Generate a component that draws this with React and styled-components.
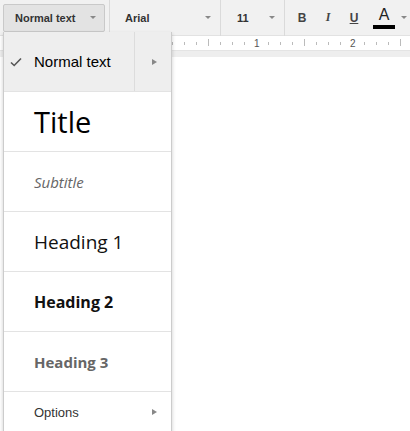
import React from "react"
import styled, { createGlobalStyle } from "styled-components"

const GlobalStyle = createGlobalStyle`
  html, body {
    margin: 0;
    padding: 0;
    background: #ffffff;
    font-family: "Liberation Sans", Arial, sans-serif;
  }
`

const Page = styled.div`
  position: relative;
  width: 410px;
  height: 431px;
  overflow: hidden;
  background: #ffffff;
`

const Toolbar = styled.div`
  display: flex;
  align-items: center;
  height: 36px;
  box-sizing: border-box;
  padding: 0 0 0 3px;
  background: #f1f1f1;
  border-bottom: 1px solid #e2e2e2;
`

const Select = styled.div`
  display: flex;
  align-items: center;
  justify-content: space-between;
  box-sizing: border-box;
  width: ${p => p.w}px;
  height: 28px;
  padding: 0 8px 0 ${p => p.pl || 11}px;
  font-size: 11px;
  font-weight: bold;
  color: #333;
  background: ${p => (p.open ? "#e3e3e3" : "transparent")};
  border: 1px solid ${p => (p.open ? "#c9c9c9" : "transparent")};
  border-radius: 2px;
`

const Caret = styled.span`
  width: 0;
  height: 0;
  border-left: 3px solid transparent;
  border-right: 3px solid transparent;
  border-top: 3px solid #888;
`

const Sep = styled.div`
  width: 1px;
  height: 36px;
  margin-left: ${p => p.ml || 0}px;
  background: #dadada;
`

const FormatButton = styled.div`
  display: flex;
  align-items: center;
  justify-content: center;
  width: 26px;
  height: 28px;
  font-size: 12px;
  font-weight: bold;
  color: #444;
  font-style: ${p => (p.italic ? "italic" : "normal")};
  text-decoration: ${p => (p.under ? "underline" : "none")};
  font-family: ${p => (p.serif ? '"Liberation Serif", serif' : '"Liberation Sans", Arial, sans-serif')};
`

const ColorButton = styled.div`
  display: flex;
  align-items: center;
  gap: 6px;
  margin-left: 6px;
`

const ColorA = styled.div`
  display: flex;
  flex-direction: column;
  align-items: center;
  width: 22px;
  font-size: 16px;
  line-height: 16px;
  color: #222;
  &::after {
    content: "";
    display: block;
    width: 22px;
    height: 4px;
    margin-top: 2px;
    background: #000;
  }
`

const Ruler = styled.div`
  position: relative;
  height: 14px;
  background: #ffffff;
`

const RulerBand = styled.div`
  height: 7px;
  background: #eeeeee;
  border-top: 1px solid #e4e4e4;
  box-sizing: border-box;
`

const Tick = styled.span`
  position: absolute;
  top: ${p => (p.major ? 3 : 6)}px;
  width: 1px;
  height: ${p => (p.major ? 7 : 3)}px;
  background: #bbb;
`

const RulerNum = styled.span`
  position: absolute;
  top: 2px;
  font-size: 10px;
  color: #555;
`

const Menu = styled.div`
  position: absolute;
  left: 3px;
  top: 32px;
  width: 169px;
  box-sizing: border-box;
  background: #fff;
  border: 1px solid #ccc;
  border-top: none;
  box-shadow: 0 2px 4px rgba(0, 0, 0, 0.2);
`

const Row = styled.div`
  display: flex;
  align-items: stretch;
  height: ${p => p.h || 60}px;
  box-sizing: border-box;
  border-bottom: ${p => (p.last ? "none" : "1px solid #e3e3e3")};
  background: ${p => (p.active ? "#eeeeee" : "#fff")};
`

const Label = styled.div`
  flex: 1;
  display: flex;
  align-items: center;
  padding-left: 30px;
  position: relative;
  font-family: ${p => p.font || '"Liberation Sans", Arial, sans-serif'};
  font-size: ${p => p.size}px;
  font-weight: ${p => p.weight || "normal"};
  font-style: ${p => (p.italic ? "italic" : "normal")};
  color: ${p => p.color || "#000"};
`

const Check = styled.svg`
  position: absolute;
  left: 6px;
  top: 50%;
  margin-top: -5px;
`

const Submenu = styled.div`
  width: 34px;
  display: flex;
  align-items: center;
  justify-content: center;
  border-left: ${p => (p.divider ? "1px solid #dcdcdc" : "none")};
  padding-left: 2px;
  &::after {
    content: "";
    width: 0;
    height: 0;
    border-top: 3.5px solid transparent;
    border-bottom: 3.5px solid transparent;
    border-left: 5px solid #888;
  }
`

const heading = '"Open Sans", "DejaVu Sans", sans-serif'

const styles = [
  { label: "Title", size: 29, font: heading },
  { label: "Subtitle", size: 15, font: heading, italic: true, color: "#666" },
  { label: "Heading 1", size: 19, font: heading, color: "#111" },
  { label: "Heading 2", size: 16, font: heading, weight: "bold", color: "#111" },
  { label: "Heading 3", size: 15, font: heading, weight: "bold", color: "#666" },
]

const ticks = []
for (let x = 172; x < 410; x += 12) {
  const major = (x - 208) % 96 === 0
  const mid = (x - 256) % 96 === 0
  if (!mid) ticks.push({ x, major })
}

export default function App() {
  return (
    <Page>
      <GlobalStyle />
      <Toolbar>
        <Select w={102} open>
          Normal text <Caret />
        </Select>
        <Sep ml={4} />
        <Select w={110} pl={14}>
          Arial <Caret />
        </Select>
        <Sep />
        <Select w={63} pl={15}>
          11 <Caret />
        </Select>
        <Sep />
        <FormatButton style={{ marginLeft: 4 }}>B</FormatButton>
        <FormatButton italic serif>I</FormatButton>
        <FormatButton under>U</FormatButton>
        <ColorButton>
          <ColorA>A</ColorA>
          <Caret />
        </ColorButton>
      </Toolbar>
      <Ruler>
        {ticks.map(t => (
          <Tick key={t.x} major={t.major} style={{ left: t.x }} />
        ))}
        <RulerNum style={{ left: 254 }}>1</RulerNum>
        <RulerNum style={{ left: 350 }}>2</RulerNum>
      </Ruler>
      <RulerBand />

      <Menu>
        <Row h={60} active>
          <Label size={15}>
            <Check width="12" height="10" viewBox="0 0 12 10">
              <path d="M1 5.5 L4.2 8.5 L11 1.5" fill="none" stroke="#555" strokeWidth="1.6" />
            </Check>
            Normal text
          </Label>
          <Submenu divider />
        </Row>
        {styles.map(s => (
          <Row key={s.label}>
            <Label size={s.size} font={s.font} italic={s.italic} weight={s.weight} color={s.color}>
              {s.label}
            </Label>
          </Row>
        ))}
        <Row h={40} last>
          <Label size={13} color="#333">Options</Label>
          <Submenu />
        </Row>
      </Menu>
    </Page>
  )
}
